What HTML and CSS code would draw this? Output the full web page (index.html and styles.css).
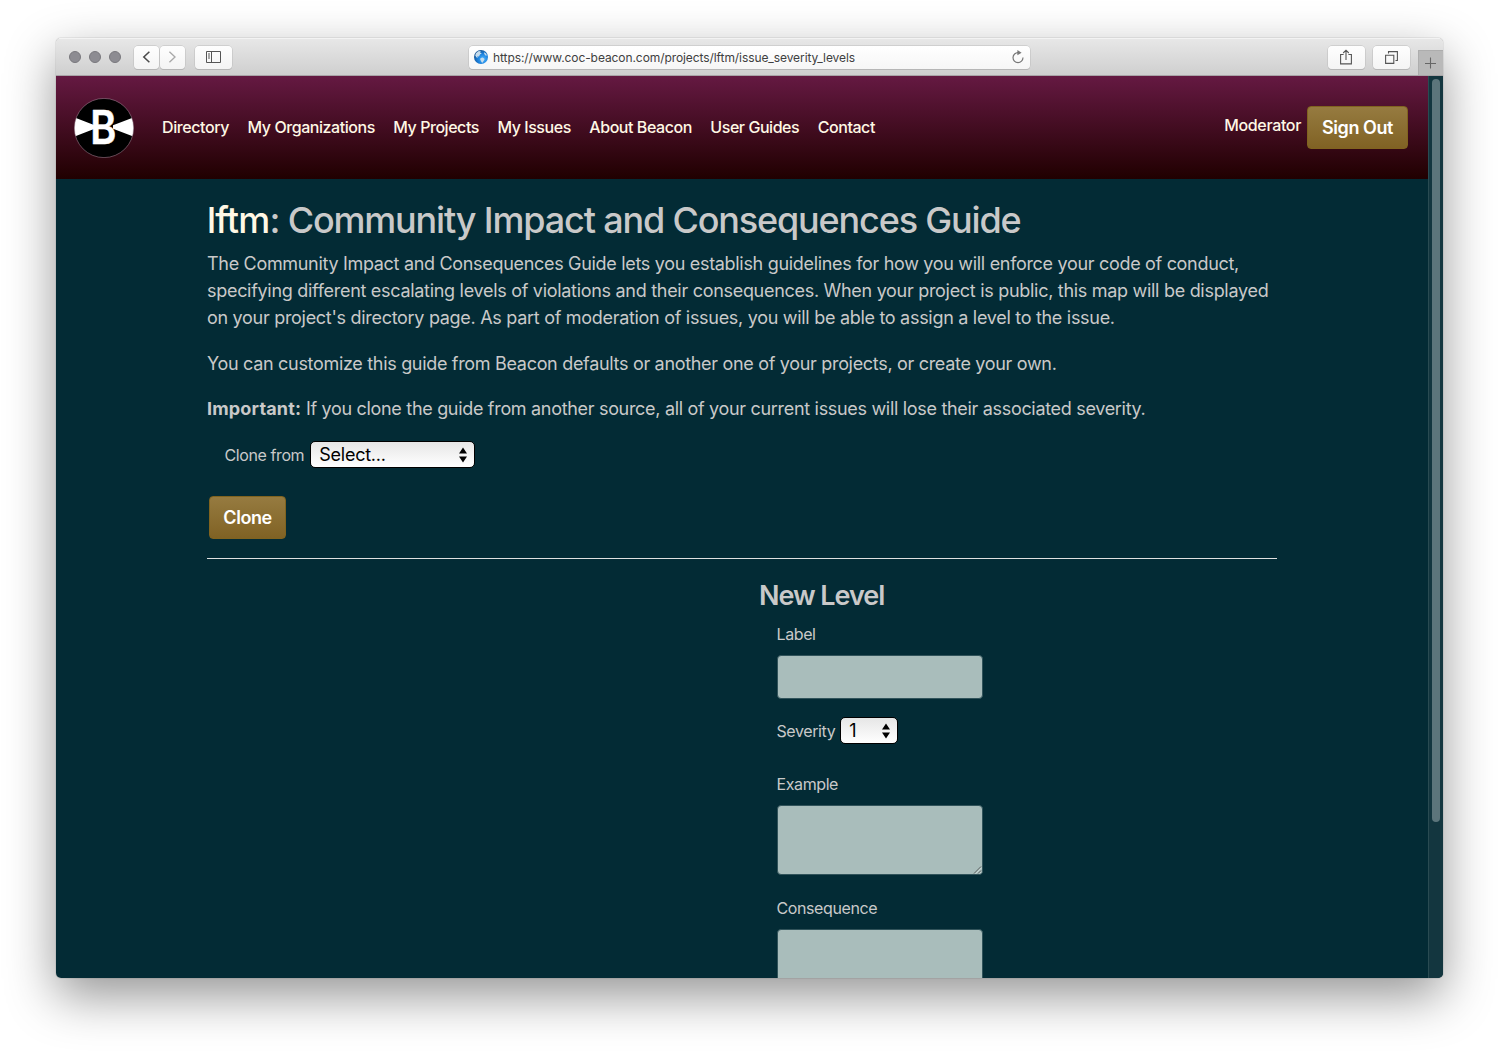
FILE: index.html
```html
<!DOCTYPE html>
<html lang="en">
<head>
<meta charset="utf-8">
<title>Community Impact and Consequences Guide</title>
<link rel="stylesheet" href="styles.css">
</head>
<body>
<div class="window">
  <div class="toolbar">
    <div class="lights"><i></i><i></i><i></i></div>
    <div class="nav-buttons">
      <span class="tool back"><svg width="26" height="22" viewBox="0 0 26 22"><path d="M16 5.5L10.2 11L16 16.5" fill="none" stroke="#4a4a4a" stroke-width="1.6"/></svg></span>
      <span class="tool forward"><svg width="26" height="22" viewBox="0 0 26 22"><path d="M9.8 5.5L15.6 11L9.8 16.5" fill="none" stroke="#a9a9a9" stroke-width="1.4"/></svg></span>
    </div>
    <span class="tool sidebar"><svg width="15" height="12" viewBox="0 0 15 12" fill="none" stroke="#555"><path d="M.5.5h14v11H.5zM5.5.5v11M2 3h2M2 5h2M2 7h2"/></svg></span>
    <div class="address">
      <svg class="globe" width="14" height="14" viewBox="0 0 14 14"><defs><radialGradient id="sea" cx=".65" cy=".65" r=".7"><stop offset="0" stop-color="#4bb4ff"/><stop offset=".55" stop-color="#1b80dc"/><stop offset="1" stop-color="#17528f"/></radialGradient></defs><circle cx="7" cy="7" r="7" fill="url(#sea)"/><path d="M2 3.2L4.2 1.2 6.8 1 6 2.4 7.8 3.2 6 4.6 5 6.4 3 6.6 4.2 7.8 2.6 7.4 1.2 5.6zM6.6 8L8.8 7.6 10.6 9 9.8 10.8 8.2 13 7.2 11.6 6.2 9.6zM10 2.2L12 3.4 13 5.6 11.4 5.4 10.2 3.8z" fill="#c6dcec"/></svg>
      <span class="url">https://www.coc-beacon.com/projects/lftm/issue_severity_levels</span>
      <svg class="reload" width="14" height="14" viewBox="0 0 14 14"><path d="M7.2 2.6A5 5 0 1 0 12 7.6" fill="none" stroke="#777" stroke-width="1.2"/><path d="M6.4 0L10.6 2.7 6.4 5.3z" fill="#777"/></svg>
    </div>
    <div class="right-tools">
      <span class="tool share"><svg width="12" height="16" viewBox="0 0 12 16" fill="none" stroke="#555" stroke-width="1.1"><path d="M3.6 5.5H.6v9.4h10.8V5.5H8.4M6 11V1.3M3.2 4L6 1.2 8.8 4"/></svg></span>
      <span class="tool tabs"><svg width="13" height="13" viewBox="0 0 13 13" fill="none" stroke="#555" stroke-width="1.1"><path d="M.6 4.2h8.2v8.2H.6zM3.5 2.5V.6h8.9v8.9H10.5"/></svg></span>
    </div>
    <span class="new-tab"><svg width="12" height="12" viewBox="0 0 12 12"><path d="M5.5 .5v11M0 6.5h11" stroke="#666" stroke-width="1.1"/></svg></span>
  </div>
  <div class="viewport">
    <div class="page">
      <header class="site-header">
        <svg class="logo" width="60" height="60" viewBox="0 0 60 60"><defs><clipPath id="disc"><circle cx="30" cy="30" r="29.6"/></clipPath></defs><circle cx="30" cy="30" r="29.6" fill="#000"/><g clip-path="url(#disc)"><path d="M0 19.3L20 27V31L0 38.7zM60 19.3L39 27.3V30.7L60 38.7z" fill="#fff"/></g><circle cx="30" cy="30" r="29.6" fill="none" stroke="#a98b9b" stroke-opacity=".75" stroke-width=".7"/><text class="logo-letter" transform="translate(29.2 45.7) scale(.86 1)" text-anchor="middle">B</text></svg>
        <nav class="menu">
          <a>Directory</a><a>My Organizations</a><a>My Projects</a><a>My Issues</a><a>About Beacon</a><a>User Guides</a><a>Contact</a>
        </nav>
        <span class="role">Moderator</span>
        <button class="btn sign-out">Sign Out</button>
      </header>
      <main class="content">
        <h1><a>lftm</a>: Community Impact and Consequences Guide</h1>
        <p class="intro">The Community Impact and Consequences Guide lets you establish guidelines for how you will enforce your code of conduct,<br><span class="looser">specifying different escalating levels of violations and their consequences. When your project is public, this map will be displayed</span><br><span class="looser">on your project's directory page. As part of moderation of issues, you will be able to assign a level to the issue.</span></p>
        <p>You can customize this guide from Beacon defaults or another one of your projects, or create your own.</p>
        <p><b>Important:</b> If you clone the guide from another source, all of your current issues will lose their associated severity.</p>
        <div class="clone-row">
          <label>Clone from</label>
          <span class="select wide">Select...<svg width="8" height="16" viewBox="0 0 8 16"><path d="M0 6.5L4 .5 8 6.5zM0 9.5h8L4 15.5z"/></svg></span>
        </div>
        <button class="btn clone">Clone</button>
        <hr>
        <section class="level-form">
          <h2>New Level</h2>
          <div class="fields">
            <label>Label</label>
            <div class="input"></div>
            <div class="severity-row"><label>Severity</label><span class="select small">1<svg width="8" height="16" viewBox="0 0 8 16"><path d="M0 6.5L4 .5 8 6.5zM0 9.5h8L4 15.5z"/></svg></span></div>
            <label>Example</label>
            <div class="input area"><svg width="9" height="9" viewBox="0 0 9 9"><path d="M1 8.5l7-7M5 8.5l3-3" stroke="#444" stroke-width=".8"/><path d="M2.7 8.7l6-6M6.7 8.7l2-2" stroke="#e8efee" stroke-width=".7"/></svg></div>
            <label class="consequence">Consequence</label>
            <div class="input area"></div>
          </div>
        </section>
      </main>
    </div>
    <div class="scrollbar"><div class="thumb"></div></div>
  </div>
</div>
</body>
</html>
```
FILE: styles.css
```css
* { box-sizing: border-box; }
body {
  margin: 0;
  width: 1499px;
  height: 1052px;
  overflow: hidden;
  padding: 38px 56px 74px;
  background: #fff;
  font-family: Inter, "Liberation Sans", sans-serif;
  color: #c9c9c9;
}
.window {
  width: 1387px;
  height: 940px;
  display: flex;
  flex-direction: column;
  overflow: hidden;
  border-radius: 5px;
  box-shadow: 0 0 1px rgba(0,0,0,.6), 0 18px 50px rgba(0,0,0,.42);
}
.toolbar {
  flex: none;
  height: 38px;
  display: flex;
  align-items: center;
  background: linear-gradient(#e7e7e7, #cfcfcf);
  border-top: 1px solid #f3f3f3;
  border-bottom: 1px solid #a9a4a7;
}
.lights { display: flex; gap: 8px; margin: 0 13px; }
.lights i { width: 12px; height: 12px; border-radius: 50%; background: #8d8c92; border: 1px solid #79787d; }
.tool {
  height: 23px;
  display: flex;
  align-items: center;
  justify-content: center;
  background: linear-gradient(#fefefe, #f4f4f4);
  border-radius: 4px;
  box-shadow: 0 0 0 .5px #bcbcbc, 0 1px 0 #b0b0b0;
}
.nav-buttons { display: flex; gap: 1px; }
.nav-buttons .tool { width: 25px; }
.sidebar { width: 37px; margin-left: 10px; }
.address {
  width: 561px;
  height: 23px;
  margin-left: 237px;
  padding: 0 5px;
  display: flex;
  align-items: center;
  background: linear-gradient(#fff, #f6f6f6);
  border-radius: 4px;
  box-shadow: 0 0 0 .5px #bcbcbc, 0 1px 0 #b0b0b0;
}
.url { margin-left: 5px; padding-top: 2px; flex: 1; font-size: 12px; line-height: 16px; color: #404040; letter-spacing: -.08px; white-space: nowrap; }
.right-tools { display: flex; gap: 8px; margin-left: auto; }
.right-tools .tool { width: 37px; }
.share { padding-right: 1px; }
.new-tab {
  width: 25px;
  height: 25px;
  margin-left: 8px;
  align-self: flex-end;
  display: flex;
  align-items: center;
  justify-content: center;
  background: #b9b9b9;
  border: 1px solid #adadad;
  border-width: 1px 0 0 1px;
}
.viewport { flex: 1; min-height: 0; display: flex; background: #032b35; }
.page { width: 1372px; overflow: hidden; }
.scrollbar { width: 15px; background: #13363f; border-left: 1px solid #294b52; padding: 3px 3px 0; }
.thumb { width: 8px; height: 743px; border-radius: 4px; background: #5c757b; }
.site-header {
  height: 103px;
  padding: 0 20px 0 18px;
  display: flex;
  align-items: center;
  background: linear-gradient(#651942, #200000);
}
.logo-letter { font: 600 46px Inter, sans-serif; fill: #fff; stroke: #fff; stroke-width: .5; stroke-linejoin: round; }
.menu { display: flex; margin: 0 0 2px 28px; gap: 18.5px; flex: 1; font-weight: 500; }
.menu a, .role { color: #fff8e5; font-size: 16px; line-height: 24px; white-space: nowrap; letter-spacing: -.45px; }
.menu a:first-child { letter-spacing: -.4px; }
.role { margin: 0 6px 5px 0; font-weight: 500; letter-spacing: -.35px; }
.btn {
  height: 43px;
  padding: 0;
  display: block;
  border: 1px solid #80631f;
  border-radius: 4px;
  background: linear-gradient(#967b40, #806224);
  color: #fff;
  font: 600 18px Inter, sans-serif;
  letter-spacing: -.45px;
}
.sign-out { width: 101px; }
.content { width: 1070px; margin: 0 auto; padding-top: 20px; }
h1 { margin: 0; height: 50.5px; font-size: 36px; line-height: 43px; font-weight: 550; letter-spacing: -1.16px; white-space: nowrap; }
h1 a { color: #fff8e5; letter-spacing: -.8px; }
p { margin: 0 0 18px; font-size: 18px; line-height: 27px; white-space: nowrap; letter-spacing: -.314px; }
.intro { margin-bottom: 19px; }
.looser { letter-spacing: -.296px; }
p b { letter-spacing: .17px; }
.clone-row { margin: 19.5px 0 0 17.5px; height: 27px; display: flex; align-items: center; gap: 6px; }
label { display: block; font-size: 16px; line-height: 24px; letter-spacing: -.4px; }
.select {
  height: 27px;
  display: flex;
  align-items: center;
  justify-content: space-between;
  padding: 0 7px 0 8px;
  color: #000;
  font-size: 18px;
  letter-spacing: -.25px;
  border: 1px solid #000;
  border-radius: 5px;
  background: linear-gradient(#e6e6e6, #fff);
}
.wide { width: 165px; }
.small { width: 58px; }
.clone { width: 77px; margin: 27.5px 0 0 2px; }
hr { margin: 19px 0 0; border: 0; height: 1px; background: #e0e0e0; }
.level-form { margin-left: 552px; padding-top: 20px; }
h2 { margin: 0; font-size: 27px; line-height: 33px; font-weight: 600; letter-spacing: -1.05px; }
.fields { padding: 10px 0 0 17.5px; }
.input { width: 206px; height: 44px; margin: 9px 0 0 .5px; border: 1px solid #31535a; border-radius: 4px; background: #a9bdbb; }
.area { height: 70px; display: flex; align-items: flex-end; justify-content: flex-end; }
.severity-row { display: flex; align-items: center; gap: 5px; margin: 18.5px 0 27.5px; }
.severity-row label { padding-top: 1px; }
.consequence { margin-top: 21px; }
```
